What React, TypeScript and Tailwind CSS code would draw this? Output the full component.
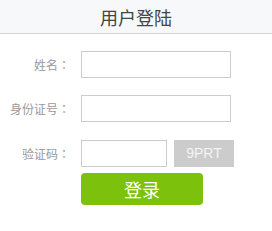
function Colon() {
  return <span style={{ fontFamily: '"Noto Sans CJK TC", sans-serif' }}>：</span>;
}

export default function App() {
  const font = { fontFamily: '"Noto Sans CJK SC", "Microsoft YaHei", sans-serif' };
  return (
    <div className="w-[272px] h-[231px] bg-white" style={font}>
      <div className="h-[34px] bg-[#f7f8fa] border-b border-[#d5d5d5] flex items-center justify-center">
        <span className="text-[18px] leading-none text-[#444]">用户登陆</span>
      </div>
      <div className="pt-[17px]">
        <div className="flex items-center h-[27px]">
          <label className="w-[70px] text-right text-[12px] text-[#999]">姓名<Colon /></label>
          <input className="ml-[11px] w-[150px] h-[27px] border border-[#ccc] outline-none" />
        </div>
        <div className="flex items-center h-[27px] mt-[17px]">
          <label className="w-[70px] text-right text-[12px] text-[#999]">身份证号<Colon /></label>
          <input className="ml-[11px] w-[150px] h-[27px] border border-[#ccc] outline-none" />
        </div>
        <div className="flex items-center h-[27px] mt-[18px]">
          <label className="w-[70px] text-right text-[12px] text-[#999]">验证码<Colon /></label>
          <input className="ml-[11px] w-[86px] h-[27px] border border-[#ccc] outline-none" />
          <div className="ml-[7px] w-[60px] h-[27px] bg-[#ccc] text-[#f4f4f4] text-[14px] flex items-center justify-center" style={{ fontFamily: '"Liberation Sans", Arial, sans-serif' }}>9PRT</div>
        </div>
        <div className="ml-[81px] mt-[6px] w-[122px] h-[32px] rounded-[4px] bg-[#7cc20c] text-white text-[18px] flex items-center justify-center">
          登录
        </div>
      </div>
    </div>
  );
}
